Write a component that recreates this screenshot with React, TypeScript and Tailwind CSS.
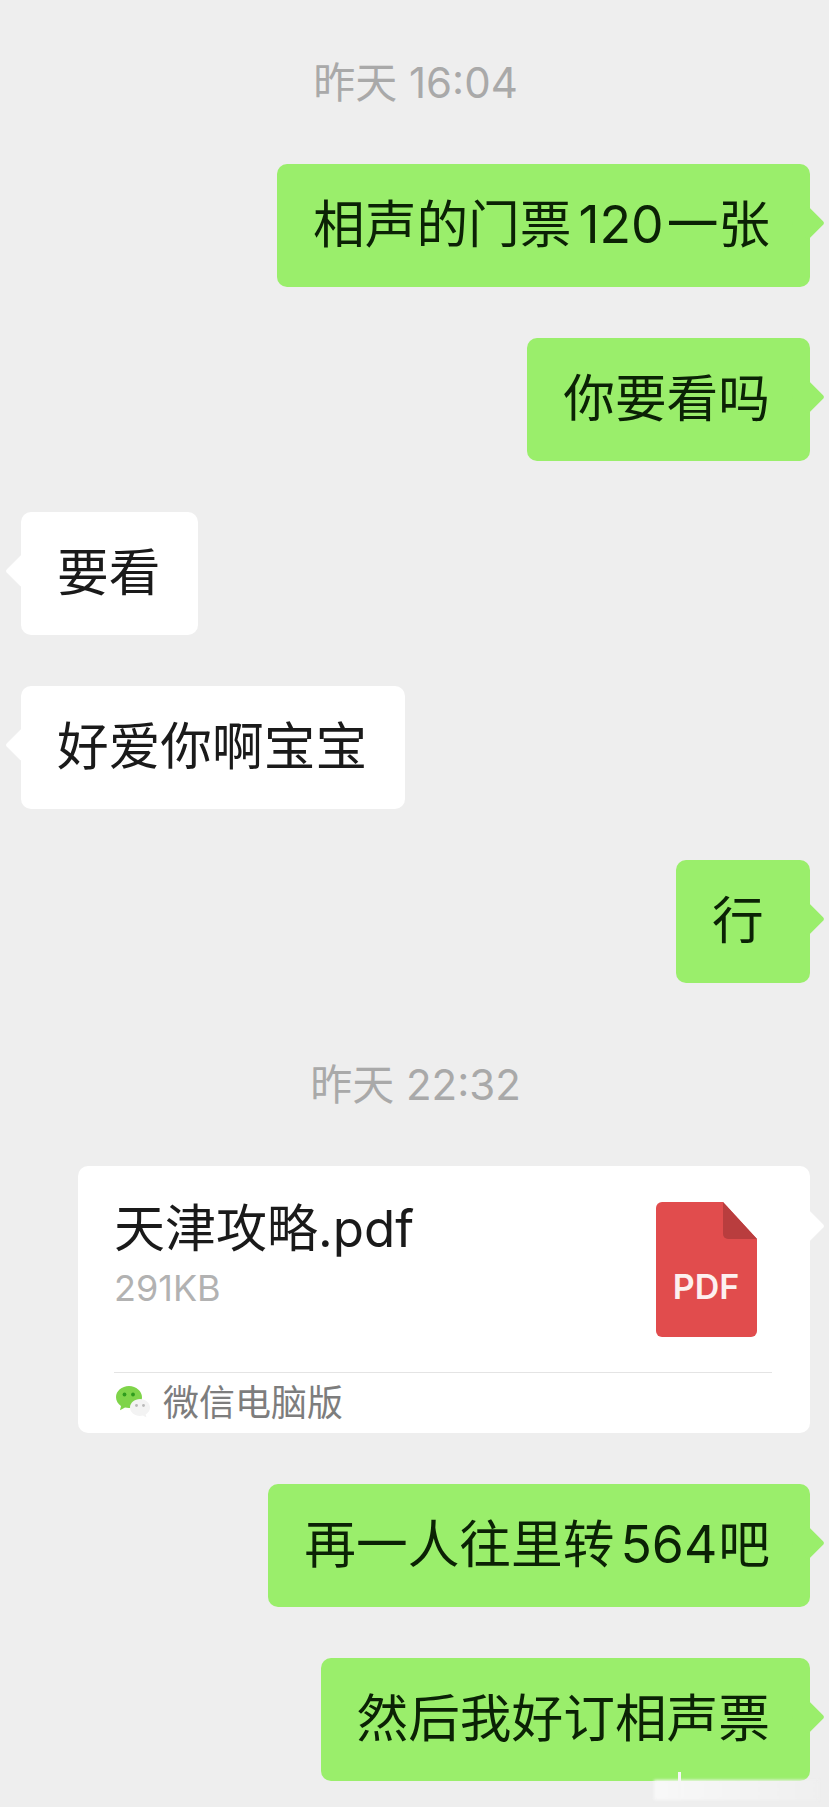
import type { ReactNode } from "react";

const cjk = "font-['Inter','Noto_Sans_CJK_SC',sans-serif]";

function Tail({ side, color, className = "top-[calc(50%-3px)]" }: { side: "left" | "right"; color: string; className?: string }) {
  return (
    <div
      className={`absolute w-[24px] h-[24px] -translate-y-1/2 rotate-45 rounded-[3px] ${color} ${className} ${
        side === "right" ? "right-[-10px]" : "left-[-11px]"
      }`}
    />
  );
}

function Time({ text, className = "" }: { text: string; className?: string }) {
  return <div className={`text-center text-[42px] leading-[48px] text-[#a9a9a9] ${className}`}>{text}</div>;
}

function Sent({ children, className = "" }: { children: ReactNode; className?: string }) {
  return (
    <div className={`flex justify-end ${className}`}>
      <div className="relative h-[123px] min-w-[134px] flex items-center rounded-[10px] bg-[#9aee6b] pl-[36px] pr-[40px] pb-[2px] text-[51.7px] text-[#0b2205] whitespace-nowrap">
        <Tail side="right" color="bg-[#9aee6b]" />
        <span className="relative">{children}</span>
      </div>
    </div>
  );
}

function Received({ children, className = "" }: { children: ReactNode; className?: string }) {
  return (
    <div className={`flex justify-start ${className}`}>
      <div className="relative h-[123px] flex items-center rounded-[10px] bg-white pl-[36px] pr-[38px] pb-[2px] text-[51.7px] text-[#1a1a1a] whitespace-nowrap">
        <Tail side="left" color="bg-white" />
        <span className="relative">{children}</span>
      </div>
    </div>
  );
}

function PdfIcon() {
  return (
    <svg width="101" height="135" viewBox="0 0 101 135" className="shrink-0">
      <path d="M6 0H67L101 37V129a6 6 0 0 1-6 6H6a6 6 0 0 1-6-6V6a6 6 0 0 1 6-6Z" fill="#e14c4d" />
      <path d="M67 0L101 37H72a5 5 0 0 1-5-5Z" fill="#b93d3e" />
      <text x="50" y="97" textAnchor="middle" fill="#fdf0ef" fontSize="34" fontWeight="600" fontFamily="Inter, sans-serif">
        PDF
      </text>
    </svg>
  );
}

function WeChatLogo() {
  return (
    <svg width="38" height="36" viewBox="0 0 36 36" className="shrink-0">
      <path d="M14 1C6.800 1 1 6 1 12.200c0 3.600 2 6.700 5 8.700l-1 4.300 5-2.700c1.300.3 2.700.5 4 .5 7.200 0 13-5 13-10.800S21.200 1 14 1Z" fill="#7fd44a" />
      <circle cx="9.500" cy="9.500" r="1.900" fill="#2f9c1e" />
      <circle cx="18" cy="9.500" r="1.900" fill="#2f9c1e" />
      <path d="M25 14c-5.500 0-10 3.700-10 8.500S19.500 31 25 31c1 0 2-.1 2.900-.4l3.600 2-.8-3.200c2.600-1.600 4.300-4 4.300-6.900 0-4.800-4.500-8.500-10-8.500Z" fill="#f3f3f3" />
      <circle cx="21.500" cy="20.500" r="1.400" fill="#b9b9b9" />
      <circle cx="28.500" cy="20.500" r="1.400" fill="#b9b9b9" />
    </svg>
  );
}

function FileCard() {
  return (
    <div className="flex justify-end mt-[57px]">
      <div className="relative w-[732px] h-[267px] rounded-[10px] bg-white pl-[36px] pr-[38px]">
        <Tail side="right" color="bg-white" className="top-[60px]" />
        <div className="relative flex justify-between pr-[15px] h-[206px]">
          <div className="pt-[33px]">
            <div className="text-[51px] leading-[60px] text-[#1a1a1a]">天津攻略.pdf</div>
            <div className="mt-[7px] text-[36px] leading-[44px] text-[#b2b2b2]">291KB</div>
          </div>
          <div className="pt-[36px]">
            <PdfIcon />
          </div>
        </div>
        <div className="relative flex items-center gap-[11px] border-t border-[#e4e4e4] h-[61px] text-[36px] text-[#7d7d7d]">
          <WeChatLogo />
          <span>微信电脑版</span>
        </div>
      </div>
    </div>
  );
}

export default function App() {
  return (
    <div className={`relative h-[1807px] w-[829px] overflow-hidden bg-[#eeeeee] pl-[21px] pr-[19px] pt-[59px] ${cjk}`}>
      <Time text="昨天 16:04" />
      <Sent className="mt-[57px]">
        相声的门票<span className="ml-[7px] mr-[3px]">120</span>一张
      </Sent>
      <Sent className="mt-[51px]">你要看吗</Sent>
      <Received className="mt-[51px]">要看</Received>
      <Received className="mt-[51px]">好爱你啊宝宝</Received>
      <Sent className="mt-[51px]">行</Sent>
      <Time text="昨天 22:32" className="mt-[78px]" />
      <FileCard />
      <Sent className="mt-[51px]">
        再一人往里转<span className="ml-[6px] mr-[1px]">564</span>吧
      </Sent>
      <Sent className="mt-[51px]">然后我好订相声票</Sent>
      {/* blurred watermark over the bottom corner */}
      <div className="absolute left-[654px] top-[1780px] h-[20px] w-[165px] bg-linear-to-r from-[#f8f8f8] to-[#efefef] blur-[1.5px]" />
      <div className="absolute left-[678px] top-[1772px] h-[27px] w-[3px] bg-[#f6f6f6] blur-[0.5px]" />
    </div>
  );
}
